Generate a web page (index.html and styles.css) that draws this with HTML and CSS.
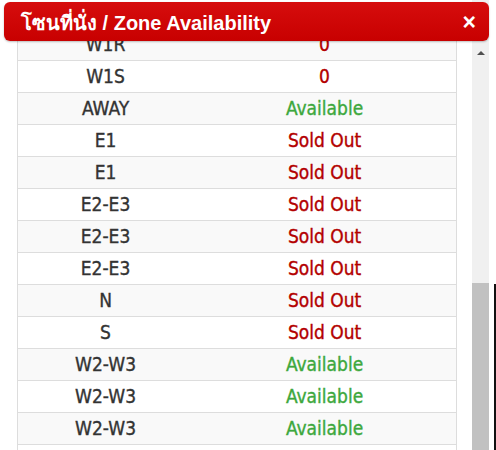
FILE: index.html
```html
<!DOCTYPE html>
<html lang="th">
<head>
<meta charset="UTF-8">
<title>Zone Availability</title>
<link rel="stylesheet" href="styles.css">
</head>
<body>

<div class="modal">
	<div class="modal-head">
		<h4 class="modal-title">โซนที่นั่ง / Zone Availability</h4>
		<span class="close">&times;</span>
	</div>

	<div class="sheet">
		<div class="zone-wrap">
			<table class="zones">
				<tr><td>W1R</td><td class="out">0</td></tr>
				<tr><td>W1S</td><td class="out">0</td></tr>
				<tr><td>AWAY</td><td class="ok">Available</td></tr>
				<tr><td>E1</td><td class="out">Sold Out</td></tr>
				<tr><td>E1</td><td class="out">Sold Out</td></tr>
				<tr><td>E2-E3</td><td class="out">Sold Out</td></tr>
				<tr><td>E2-E3</td><td class="out">Sold Out</td></tr>
				<tr><td>E2-E3</td><td class="out">Sold Out</td></tr>
				<tr><td>N</td><td class="out">Sold Out</td></tr>
				<tr><td>S</td><td class="out">Sold Out</td></tr>
				<tr><td>W2-W3</td><td class="ok">Available</td></tr>
				<tr><td>W2-W3</td><td class="ok">Available</td></tr>
				<tr><td>W2-W3</td><td class="ok">Available</td></tr>
				<tr><td>&nbsp;</td><td>&nbsp;</td></tr>
			</table>
		</div>

		<!-- fake scrollbar, the list is scrolled near the bottom -->
		<div class="scrollbar">
			<span class="arrow"></span>
			<div class="thumb"></div>
		</div>
		<div class="edge"><span class="line"></span></div>
	</div>
</div>

</body>
</html>
```

FILE: styles.css
```css
body {
	margin: 0;
	height: 450px;
	overflow: hidden;
	background: #fff;
	font-family: "DejaVu Sans Condensed", "DejaVu Sans", Verdana, sans-serif;
}
.modal {
	position: relative;
	height: 450px;
}
.modal-head {
	position: absolute;
	top: 2px;
	left: 4px;
	width: 485px;
	height: 39px;
	box-sizing: border-box;
	padding: 2px 13px 0 17px;
	display: flex;
	align-items: center;
	justify-content: space-between;
	background: linear-gradient(#d60d0d, #c80000);
	border-radius: 6px;
	box-shadow: 0 1px 2px rgba(0,0,0,.25);
	color: #fff;
	z-index: 2;
}
.modal-title {
	margin: 0;
	font-family: "Liberation Sans", Arial, "Noto Sans", sans-serif;
	font-size: 20px;
	font-weight: bold;
}
.close {
	font-family: "Liberation Sans", Arial, sans-serif;
	font-size: 23px;
	font-weight: bold;
	line-height: 1;
}
.sheet {
	display: flex;
	height: 450px;
	padding-left: 17px;
}
.zone-wrap {
	width: 440px;
	padding-top: 28px;
}
.zones {
	width: 440px;
	border-collapse: collapse;
	border-left: 1px solid #ddd;
	border-right: 1px solid #ddd;
	font-size: 19px;
	color: #333;
	-webkit-text-stroke: 0.35px;
}
.zones tr:nth-child(odd) {
	background: #f9f9f9;
}
.zones td {
	border-top: 1px solid #ddd;
	height: 30px;
	padding: 0 0 1px;
	text-align: center;
	line-height: 30px;
}
.zones td:first-child {
	width: 40%;
}
.zones .out {
	color: #b30000;
}
.zones .ok {
	color: #3da83d;
}
.scrollbar {
	margin-left: 15px;
	width: 17px;
	height: 450px;
	background: #f0f0f0;
	display: flex;
	flex-direction: column;
	align-items: center;
}
.arrow {
	margin-top: 51px;
	width: 0;
	height: 0;
	border-left: 4px solid transparent;
	border-right: 4px solid transparent;
	border-bottom: 4px solid #505050;
}
.thumb {
	margin-top: auto;
	width: 17px;
	height: 167px;
	background: #c1c1c1;
}
.edge {
	flex: 1;
	display: flex;
	justify-content: flex-end;
	align-items: flex-end;
}
.edge .line {
	width: 2px;
	height: 166px;
	background: #111;
}
```
